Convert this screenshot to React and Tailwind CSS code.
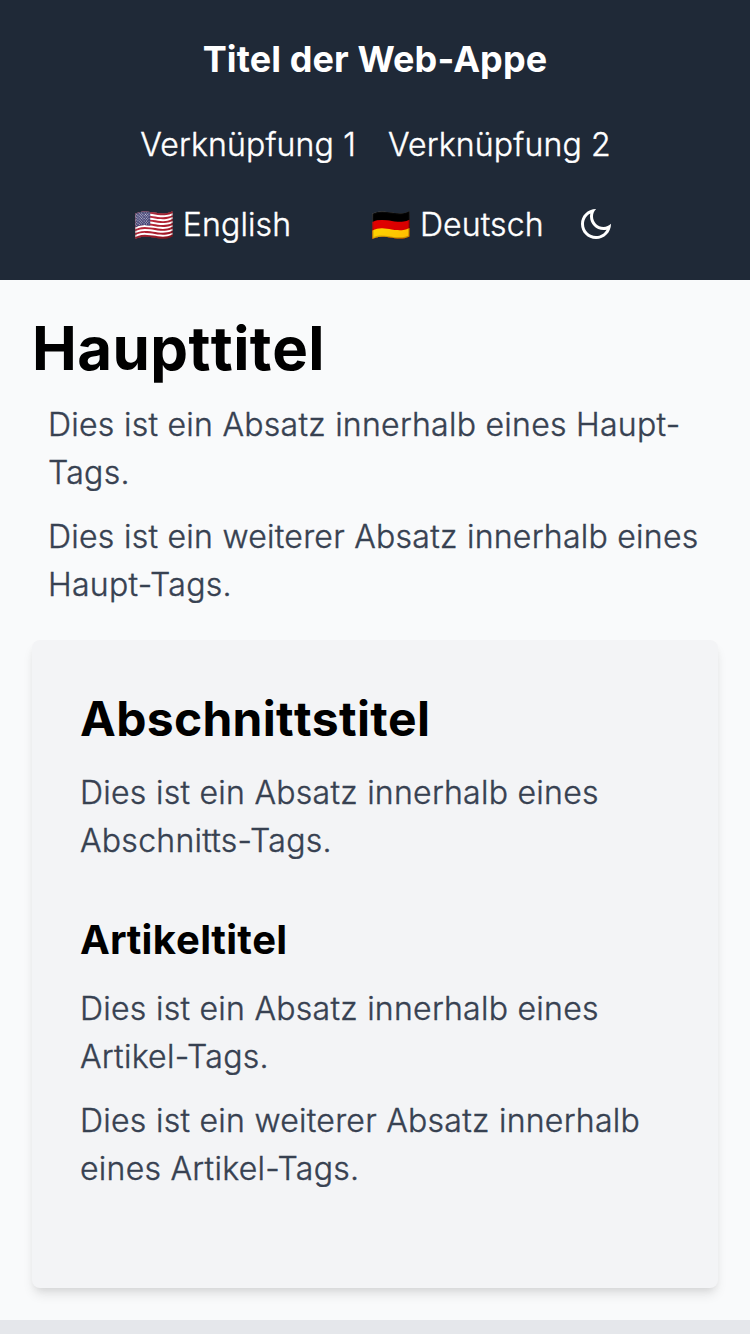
import { RiMoonLine } from "react-icons/ri";

const paragraph = "text-[#374151] font-light tracking-[0.27px] [-webkit-text-stroke:0.4px_currentColor]";
const heading = "font-bold [font-kerning:none]";

export default function App() {
  return (
    <div className="h-[1334px] overflow-hidden bg-[#f9fafb] font-['Inter',sans-serif] text-[32px] leading-[48px] text-black">
      <header className="flex h-[280px] flex-col items-center bg-[#1f2937] pt-[31px] text-white">
        <h1 className="text-[36px] leading-[56px] font-bold tracking-[0.1px]">Titel der Web-Appe</h1>
        <nav className="mt-[34px] flex gap-8 pl-px font-light tracking-[0.16px] [-webkit-text-stroke:0.4px_currentColor]">
          <a>Verknüpfung 1</a>
          <a>Verknüpfung 2</a>
        </nav>
        <div className="mt-8 flex items-center pr-0.5 font-light tracking-[0.15px] [word-spacing:-0.7px] [-webkit-text-stroke:0.4px_currentColor]">
          <span>🇺🇸 English</span>
          <span className="ml-20">🇩🇪 Deutsch</span>
          <RiMoonLine className="mb-0.5 ml-[34px] size-9" strokeWidth="0" />
        </div>
      </header>
      <main className="p-8">
        <h1 className={`text-[60px] leading-[72px] tracking-[0.4px] ${heading}`}>Haupttitel</h1>
        <p className={`mt-[17px] px-4 ${paragraph}`}>Dies ist ein Absatz innerhalb eines Haupt-Tags.</p>
        <p className={`mt-4 px-4 ${paragraph}`}>Dies ist ein weiterer Absatz innerhalb eines Haupt-Tags.</p>
        <section className="mt-[31px] h-[648px] rounded-lg bg-[#f3f4f6] px-12 pt-[47px] shadow-[0_8px_12px_-2px_rgb(0_0_0/0.1),0_4px_8px_-4px_rgb(0_0_0/0.1)]">
          <h2 className={`text-[48px] leading-[64px] tracking-[0.3px] ${heading}`}>Abschnittstitel</h2>
          <p className={`mt-[18px] ${paragraph}`}>Dies ist ein Absatz innerhalb eines Abschnitts-Tags.</p>
          <h3 className={`mt-[47px] text-[40px] leading-[56px] tracking-[0.25px] ${heading}`}>Artikeltitel</h3>
          <p className={`mt-[17px] ${paragraph}`}>Dies ist ein Absatz innerhalb eines Artikel-Tags.</p>
          <p className={`mt-4 ${paragraph}`}>Dies ist ein weiterer Absatz innerhalb eines Artikel-Tags.</p>
        </section>
      </main>
      <footer className="h-4 bg-[#e5e7eb]" />
    </div>
  );
}
